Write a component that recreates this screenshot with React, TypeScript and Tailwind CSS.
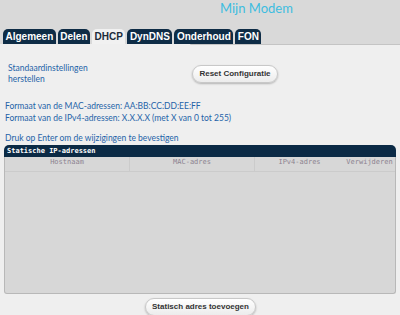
import React from 'react'

const tabs = ['Algemeen', 'Delen', 'DHCP', 'DynDNS', 'Onderhoud', 'FON']

const blue = "font-['Lato',sans-serif] text-[#2563a8]"
const mono = "font-['DejaVu_Sans_Mono',monospace]"
const btn =
  "font-['Liberation_Sans',Arial,sans-serif] font-bold text-[8px] text-[#333] rounded-full border border-[#c8c8c8] bg-gradient-to-b from-white to-[#ececec] shadow-[0_1px_2px_rgba(0,0,0,0.25)]"

const App = () => {
  return (
    <div className="w-[400px] h-[315px] bg-[#efefef] overflow-hidden">
      <header className="h-[44px] bg-[#d9d9d9] flex flex-col">
        <div className="h-[29px] pl-[220px] pt-[1px] font-['Lato',sans-serif] text-[13px] leading-[14px] text-[#3dbde0]">
          Mijn Modem
        </div>
        <nav className="flex gap-[2px] pl-[3px]">
          {tabs.map((t) => (
            <div
              key={t}
              className={
                "h-[15px] px-[2.5px] rounded-t-[5px] font-['Liberation_Sans',Arial,sans-serif] font-bold text-[10px] leading-[16px] " +
                (t === 'DHCP' ? 'bg-[#f1f1f1] text-[#1c2b3a]' : 'bg-[#0e2c46] text-white')
              }
            >
              {t}
            </div>
          ))}
        </nav>
      </header>
      <div className="h-[1px] ml-[190px] bg-[#c4c4c4] rounded-tl" />

      <main className="flex flex-col">
        <div className="flex items-start pt-[18px] pl-[8px]">
          <div className={blue + ' w-[184px] text-[8.5px] leading-[11px]'}>
            Standaardinstellingen
            <br />
            herstellen
          </div>
          <button className={btn + ' mt-[2px] h-[18px] w-[86px]'}>Reset Configuratie</button>
        </div>

        <div className={blue + ' pl-[5px] pt-[15px] text-[8.5px] leading-[12px]'}>
          <div>Formaat van de MAC-adressen: AA:BB:CC:DD:EE:FF</div>
          <div>Formaat van de IPv4-adressen: X.X.X.X (met X van 0 tot 255)</div>
        </div>

        <div className={blue + ' pl-[5px] pt-[8px] text-[8.5px] leading-[12px]'}>
          Druk op Enter om de wijzigingen te bevestigen
        </div>

        <section className="mx-[4px] mt-[1px] flex flex-col">
          <div className={mono + ' h-[12px] rounded-t-[5px] bg-[#0b2a45] px-[3px] text-[7px] font-bold leading-[12px] text-white'}>
            Statische IP-adressen
          </div>
          <div className="h-[137px] bg-[#d7d7d7] border-x border-b border-[#b8b8b8] rounded-b-[3px]">
            <div className={mono + ' grid grid-cols-[125px_125px_89px_1fr] h-[15px] border-b border-[#cbcbcb] text-[7px] leading-[10px] text-[#8c8390]'}>
              <div className="text-center border-r border-[#cbcbcb]">Hostnaam</div>
              <div className="text-center border-r border-[#cbcbcb]">MAC-adres</div>
              <div className="text-center">IPv4-adres</div>
              <div className="text-center">Verwijderen</div>
            </div>
          </div>
        </section>

        <div className="flex justify-center pt-[4px] pl-[1px]">
          <button className={btn + ' h-[18px] w-[111px]'}>Statisch adres toevoegen</button>
        </div>
      </main>
    </div>
  )
}

export default App
